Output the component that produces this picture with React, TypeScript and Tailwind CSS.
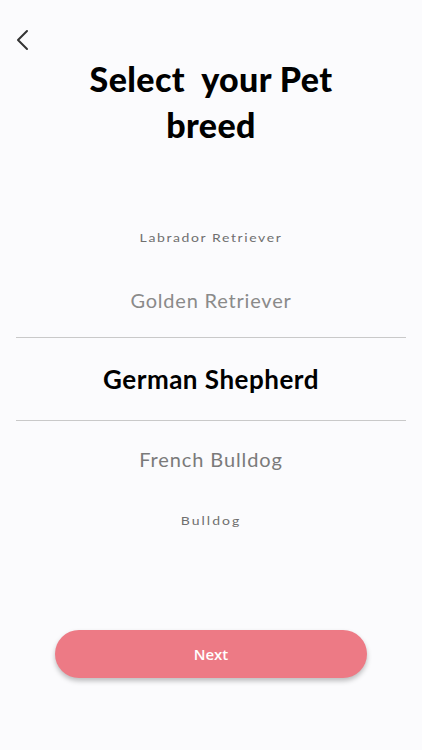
import React from "react";

export default function App() {
  return (
    <div className="w-[422px] h-[750px] bg-[#fbfbfd] flex flex-col" style={{ fontFamily: "Lato, 'Noto Sans', sans-serif" }}>
      <div className="h-[78px] pt-[29px] pl-[15px]">
        <svg width="18" height="22" viewBox="0 0 18 22" fill="none">
          <path d="M12 2 L3 11 L12 20" stroke="#333" strokeWidth="2" strokeLinecap="round" strokeLinejoin="round" />
        </svg>
      </div>
      <h1 className="-mt-[22px] text-center text-[34px] leading-[46px] font-black text-black tracking-[0.4px]">
        Select&nbsp; your Pet<br />breed
      </h1>
      <div className="mt-[79px] flex flex-col items-center">
        <div className="h-[20px] flex items-center text-[14px] text-[#6f6f6f] tracking-[1.6px] scale-y-[0.85]">Labrador Retriever</div>
        <div className="mt-[40px] h-[26px] flex items-center text-[20px] text-[#8a8a8a] tracking-[0.8px]">Golden Retriever</div>
      </div>
      <div className="mx-[16px] mt-[24px] h-[84px] border-y-[1.5px] border-[#c9c9c9] flex items-center justify-center">
        <span className="text-[26px] font-bold text-black tracking-[0.5px]">German Shepherd</span>
      </div>
      <div className="flex flex-col items-center">
        <div className="mt-[25px] h-[26px] flex items-center text-[20px] text-[#7a7a7a] tracking-[0.9px]">French Bulldog</div>
        <div className="mt-[38px] h-[20px] flex items-center text-[14px] text-[#6f6f6f] tracking-[2px] scale-y-[0.85]">Bulldog</div>
      </div>
      <div className="mt-[100px] px-[55px]">
        <button className="w-full h-[48px] rounded-full bg-[#ed7a85] text-white text-[15px] font-semibold shadow-[0_3px_5px_rgba(0,0,0,0.25)]" style={{ fontFamily: "'Open Sans', sans-serif" }}>
          Next
        </button>
      </div>
    </div>
  );
}
